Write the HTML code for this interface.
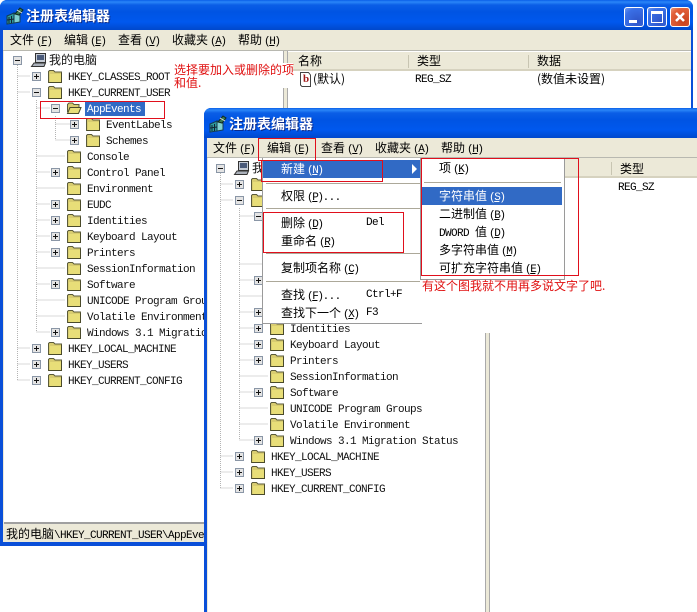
<!DOCTYPE html>
<html><head><meta charset="utf-8"><style>
html,body{margin:0;padding:0;background:#fff}
#p{position:relative;width:697px;height:612px;overflow:hidden;background:#fff;font:12px/16px "WenQuanYi Zen Hei","Noto Sans CJK SC",sans-serif;color:#000}
#p div{position:absolute;white-space:nowrap}
.title{background:linear-gradient(#0a5fe8 0,#2a86f8 2px,#0b5ee6 5px,#0054e3 12px,#0058ee 22px,#0048cc 100%)}
.tt{color:#fff;font-weight:bold;font-size:14px;line-height:16px;text-shadow:1px 1px 0 #0a2a8a}
.a{font:11px/16px "Liberation Mono",monospace;letter-spacing:-1.4px;margin-left:2px}
.m{font:11px/16px "Liberation Mono",monospace;letter-spacing:-.6px}
.w{color:#fff}
.r{color:#e01010}
.box{border:1px solid #e00f1c;box-sizing:border-box}
svg text{font:11px "Liberation Mono",monospace;letter-spacing:-.6px;fill:#111}
svg text.c{font:12px "WenQuanYi Zen Hei","Noto Sans CJK SC",sans-serif;letter-spacing:0}
.ln{stroke:#b4b4b4;stroke-dasharray:1 1;stroke-width:1;fill:none}
.btn{border:1px solid #fff;border-radius:3px;box-sizing:border-box;width:20px;height:20px;background:radial-gradient(circle at 70% 75%,#2f55c8,#3a6fe6 70%,#6f9af0)}
</style></head><body><div id="p">
<svg width="0" height="0" style="position:absolute"><defs>
<symbol id="f" width="16" height="14" viewBox="0 0 16 14"><path d="M1.500 3.500V2.500L2.500 1.500H6.500L8 3H14.500V13.500H1.500Z" fill="#d8cc70" stroke="#5a5a3a"/><rect x="3" y="5" width="11" height="8" fill="#e8de78"/><path d="M14.500 4V13.500H2" stroke="#4a4a2a" fill="none"/></symbol>
<symbol id="o" width="16" height="14" viewBox="0 0 16 14"><path d="M1.500 11V3.500L3 2H6.500L8 3.500H13V6" fill="#d8cc70" stroke="#5a5a3a"/><path d="M1.500 12.500L4 6.500H15L12.500 12.500Z" fill="#e8de78" stroke="#4a4a2a"/></symbol>
<symbol id="p1" width="9" height="9" viewBox="0 0 9 9"><rect x=".5" y=".5" width="8" height="8" fill="#e4e4e4" stroke="#8a96a6"/><path d="M2 4.500H7M4.500 2V7" stroke="#111"/></symbol>
<symbol id="m1" width="9" height="9" viewBox="0 0 9 9"><rect x=".5" y=".5" width="8" height="8" fill="#e4e4e4" stroke="#8a96a6"/><path d="M2 4.500H7" stroke="#111"/></symbol>
<symbol id="pc" width="18" height="16" viewBox="0 0 18 16"><path d="M5.500 1.500H15.500V10.500H5.500Z" fill="#c6ccd6" stroke="#333"/><rect x="7" y="3" width="7" height="5" fill="#4a5a7a"/><path d="M1.500 14.500L4 11H15.500L14 14.500Z" fill="#aab0ba" stroke="#333"/></symbol>
<symbol id="reg" width="20" height="18" viewBox="0 0 20 18"><path d="M2 9L9 6V16L2 17Z" fill="#2f9a9a" stroke="#143c50"/><path d="M9 6L15 8V15L9 16Z" fill="#7fd0d0" stroke="#143c50"/><path d="M4 10V16M6.500 9V16M2 13L9 12" stroke="#123" fill="none"/><path d="M10 7L15 1L18 3L14 8Z" fill="#3a7a50" stroke="#102a20"/><path d="M12 3L17 6" stroke="#ddd"/></symbol>
</defs></svg>

<!-- WINDOW 1 -->
<div style="left:0;top:0;width:693px;height:546px;background:#0a4fd8;border-radius:7px 7px 0 0"></div>
<div class="title" style="left:0;top:0;width:693px;height:30px;border-radius:7px 7px 0 0"></div>
<svg style="position:absolute;left:5px;top:7px" width="20" height="18"><use href="#reg"/></svg>
<div class="tt" style="left:26px;top:8px">注册表编辑器</div>
<div class="btn" style="left:624px;top:7px"><div style="left:4px;top:12px;width:8px;height:3px;background:#fff"></div></div>
<div class="btn" style="left:647px;top:7px"><div style="left:3px;top:3px;width:12px;height:12px;border:1px solid #fff;border-top-width:3px;box-sizing:border-box"></div></div>
<div class="btn" style="left:670px;top:7px;background:radial-gradient(circle at 70% 75%,#c8401c,#e2613a 70%,#ec9a7c)"><svg style="position:absolute;left:2px;top:2px" width="14" height="14"><path d="M3 3L11 11M11 3L3 11" stroke="#fff" stroke-width="2.500"/></svg></div>
<div style="left:3px;top:30px;width:688px;height:512px;background:#ece9d8"></div>
<div style="left:3px;top:50px;width:688px;height:1px;background:#b8b8b0"></div>
<div style="left:10px;top:32px">文件<span class="a">(<u>F</u>)</span></div>
<div style="left:64px;top:32px">编辑<span class="a">(<u>E</u>)</span></div>
<div style="left:118px;top:32px">查看<span class="a">(<u>V</u>)</span></div>
<div style="left:172px;top:32px">收藏夹<span class="a">(<u>A</u>)</span></div>
<div style="left:238px;top:32px">帮助<span class="a">(<u>H</u>)</span></div>
<div style="left:4px;top:51px;width:279px;height:471px;background:#fff"></div>
<div style="left:283px;top:51px;width:5px;height:471px;background:#ece9d8;border-left:1px solid #aaa;border-right:1px solid #aaa;box-sizing:border-box"></div>
<div style="left:288px;top:51px;width:403px;height:57px;background:#fff"></div>
<div style="left:288px;top:52px;width:403px;height:19px;background:#ece9d8;border-bottom:2px solid #d6d2bf;box-sizing:border-box"></div>
<div style="left:408px;top:55px;width:1px;height:13px;background:#c8c5b2"></div>
<div style="left:528px;top:55px;width:1px;height:13px;background:#c8c5b2"></div>
<div style="left:298px;top:53px">名称</div><div style="left:417px;top:53px">类型</div><div style="left:537px;top:53px">数据</div>
<svg style="position:absolute;left:300px;top:72px" width="12" height="15"><path d="M.5.500H8.500L10.500 3V14.500H2L.5 13Z" fill="#fff" stroke="#444"/><text x="3" y="10" style="font:bold 11px 'Liberation Serif',serif;fill:#a01818;letter-spacing:0">b</text></svg>
<div style="left:313px;top:71px">(默认)</div>
<div class="m" style="left:415px;top:72px">REG_SZ</div>
<div style="left:537px;top:71px">(数值未设置)</div>
<div style="left:4px;top:522px;width:687px;height:2px;background:#a0a0a0"></div>
<div style="left:6px;top:526px">我的电脑<span class="m">\HKEY_CURRENT_USER\AppEvents</span></div>

<svg style="position:absolute;left:4px;top:51px" width="279" height="471" viewBox="4 51 279 471">
<path class="ln" d="M17.500 65V380M36.500 100V332M55.500 116V140M17.500 76H30M17.500 92H30M17.500 348H30M17.500 364H30M17.500 380H30M36.500 108H50M36.500 156H65M36.500 172H50M36.500 188H65M36.500 204H50M36.500 220H50M36.500 236H50M36.500 252H50M36.500 268H65M36.500 284H50M36.500 300H65M36.500 316H65M36.500 332H50M55.500 124H70M55.500 140H70"/>
<use href="#m1" x="13" y="56"/><use href="#pc" x="30" y="52"/><text class="c" x="49" y="64">我的电脑</text>
<use href="#p1" x="32" y="72"/><use href="#f" x="47" y="69"/><text x="68" y="80">HKEY_CLASSES_ROOT</text>
<use href="#m1" x="32" y="88"/><use href="#f" x="47" y="85"/><text x="68" y="96">HKEY_CURRENT_USER</text>
<use href="#m1" x="51" y="104"/><use href="#o" x="66" y="101"/><rect x="85" y="101" width="60" height="15" fill="#316ac5"/><text x="87" y="112" style="fill:#fff">AppEvents</text>
<use href="#p1" x="70" y="120"/><use href="#f" x="85" y="117"/><text x="106" y="128">EventLabels</text>
<use href="#p1" x="70" y="136"/><use href="#f" x="85" y="133"/><text x="106" y="144">Schemes</text>
<use href="#f" x="66" y="149"/><text x="87" y="160">Console</text>
<use href="#p1" x="51" y="168"/><use href="#f" x="66" y="165"/><text x="87" y="176">Control Panel</text>
<use href="#f" x="66" y="181"/><text x="87" y="192">Environment</text>
<use href="#p1" x="51" y="200"/><use href="#f" x="66" y="197"/><text x="87" y="208">EUDC</text>
<use href="#p1" x="51" y="216"/><use href="#f" x="66" y="213"/><text x="87" y="224">Identities</text>
<use href="#p1" x="51" y="232"/><use href="#f" x="66" y="229"/><text x="87" y="240">Keyboard Layout</text>
<use href="#p1" x="51" y="248"/><use href="#f" x="66" y="245"/><text x="87" y="256">Printers</text>
<use href="#f" x="66" y="261"/><text x="87" y="272">SessionInformation</text>
<use href="#p1" x="51" y="280"/><use href="#f" x="66" y="277"/><text x="87" y="288">Software</text>
<use href="#f" x="66" y="293"/><text x="87" y="304">UNICODE Program Groups</text>
<use href="#f" x="66" y="309"/><text x="87" y="320">Volatile Environment</text>
<use href="#p1" x="51" y="328"/><use href="#f" x="66" y="325"/><text x="87" y="336">Windows 3.1 Migration Status</text>
<use href="#p1" x="32" y="344"/><use href="#f" x="47" y="341"/><text x="68" y="352">HKEY_LOCAL_MACHINE</text>
<use href="#p1" x="32" y="360"/><use href="#f" x="47" y="357"/><text x="68" y="368">HKEY_USERS</text>
<use href="#p1" x="32" y="376"/><use href="#f" x="47" y="373"/><text x="68" y="384">HKEY_CURRENT_CONFIG</text>
</svg>
<div style="left:170px;top:63px;width:123px;height:25px;background:#fff"></div>
<div class="r" style="left:174px;top:63px;line-height:13px">选择要加入或删除的项<br>和值.</div>
<div class="box" style="left:40px;top:101px;width:125px;height:18px"></div>

<!-- WINDOW 2 -->
<div style="left:204px;top:108px;width:493px;height:504px;background:#0a4fd8;border-radius:7px 0 0 0"></div>
<div class="title" style="left:204px;top:108px;width:493px;height:30px;border-radius:7px 0 0 0"></div>
<svg style="position:absolute;left:208px;top:115px" width="20" height="18"><use href="#reg"/></svg>
<div class="tt" style="left:229px;top:116px">注册表编辑器</div>
<div style="left:207px;top:138px;width:490px;height:474px;background:#ece9d8"></div>
<div style="left:207px;top:157px;width:490px;height:1px;background:#b8b8b0"></div>
<div style="left:213px;top:140px">文件<span class="a">(<u>F</u>)</span></div>
<div style="left:267px;top:140px">编辑<span class="a">(<u>E</u>)</span></div>
<div style="left:321px;top:140px">查看<span class="a">(<u>V</u>)</span></div>
<div style="left:375px;top:140px">收藏夹<span class="a">(<u>A</u>)</span></div>
<div style="left:441px;top:140px">帮助<span class="a">(<u>H</u>)</span></div>
<div style="left:208px;top:158px;width:277px;height:454px;background:#fff"></div>
<div style="left:485px;top:158px;width:5px;height:454px;background:#ece9d8;border-left:1px solid #aaa;border-right:1px solid #aaa;box-sizing:border-box"></div>
<div style="left:490px;top:158px;width:207px;height:454px;background:#fff"></div>
<div style="left:490px;top:158px;width:207px;height:20px;background:#ece9d8;border-bottom:2px solid #d6d2bf;box-sizing:border-box"></div>
<div style="left:611px;top:162px;width:1px;height:13px;background:#c8c5b2"></div>
<div style="left:620px;top:161px">类型</div>
<div class="m" style="left:618px;top:180px">REG_SZ</div>

<svg style="position:absolute;left:208px;top:158px" width="277" height="454" viewBox="208 158 277 454">
<path class="ln" d="M220.500 173V488M239.500 208V440M220.500 184H233M220.500 200H233M220.500 456H233M220.500 472H233M220.500 488H233M239.500 216H254M239.500 264H268M239.500 280H254M239.500 296H268M239.500 312H254M239.500 328H254M239.500 344H254M239.500 360H254M239.500 376H268M239.500 392H254M239.500 408H268M239.500 424H268M239.500 440H254"/>
<use href="#m1" x="216" y="164"/><use href="#pc" x="233" y="160"/><text class="c" x="252" y="172">我的电脑</text>
<use href="#p1" x="235" y="180"/><use href="#f" x="250" y="177"/>
<use href="#m1" x="235" y="196"/><use href="#f" x="250" y="193"/>
<use href="#m1" x="254" y="212"/>
<use href="#p1" x="254" y="276"/>
<use href="#p1" x="254" y="308"/>
<use href="#p1" x="254" y="324"/><use href="#f" x="269" y="321"/><text x="290" y="332">Identities</text>
<use href="#p1" x="254" y="340"/><use href="#f" x="269" y="337"/><text x="290" y="348">Keyboard Layout</text>
<use href="#p1" x="254" y="356"/><use href="#f" x="269" y="353"/><text x="290" y="364">Printers</text>
<use href="#f" x="269" y="369"/><text x="290" y="380">SessionInformation</text>
<use href="#p1" x="254" y="388"/><use href="#f" x="269" y="385"/><text x="290" y="396">Software</text>
<use href="#f" x="269" y="401"/><text x="290" y="412">UNICODE Program Groups</text>
<use href="#f" x="269" y="417"/><text x="290" y="428">Volatile Environment</text>
<use href="#p1" x="254" y="436"/><use href="#f" x="269" y="433"/><text x="290" y="444">Windows 3.1 Migration Status</text>
<use href="#p1" x="235" y="452"/><use href="#f" x="250" y="449"/><text x="271" y="460">HKEY_LOCAL_MACHINE</text>
<use href="#p1" x="235" y="468"/><use href="#f" x="250" y="465"/><text x="271" y="476">HKEY_USERS</text>
<use href="#p1" x="235" y="484"/><use href="#f" x="250" y="481"/><text x="271" y="492">HKEY_CURRENT_CONFIG</text>
</svg>

<!-- white patch under menus -->
<div style="left:420px;top:279px;width:277px;height:54px;background:#fff"></div>

<!-- MENU -->
<div style="left:262px;top:158px;width:160px;height:166px;background:#fff;border-bottom:1px solid #9a9a9a;border-left:1px solid #9a9a9a;box-sizing:border-box"></div>
<div style="left:263px;top:160px;width:157px;height:18px;background:#316ac5"></div>
<div class="w" style="left:281px;top:161px">新建<span class="a">(<u>N</u>)</span></div>
<svg style="position:absolute;left:412px;top:164px" width="6" height="10"><path d="M0 0L5 5L0 10Z" fill="#fff"/></svg>
<div style="left:266px;top:183px;width:154px;height:1px;background:#aca899"></div>
<div style="left:281px;top:188px">权限<span class="a">(<u>P</u>)</span><span class="m">...</span></div>
<div style="left:266px;top:208px;width:154px;height:1px;background:#aca899"></div>
<div style="left:281px;top:215px">删除<span class="a">(<u>D</u>)</span></div><div class="m" style="left:366px;top:215px">Del</div>
<div style="left:281px;top:233px">重命名<span class="a">(<u>R</u>)</span></div>
<div style="left:266px;top:253px;width:154px;height:1px;background:#aca899"></div>
<div style="left:281px;top:260px">复制项名称<span class="a">(<u>C</u>)</span></div>
<div style="left:266px;top:281px;width:154px;height:1px;background:#aca899"></div>
<div style="left:281px;top:287px">查找<span class="a">(<u>F</u>)</span><span class="m">...</span></div><div class="m" style="left:366px;top:287px">Ctrl+F</div>
<div style="left:281px;top:305px">查找下一个<span class="a">(<u>X</u>)</span></div><div class="m" style="left:366px;top:305px">F3</div>

<!-- SUBMENU -->
<div style="left:420px;top:158px;width:145px;height:122px;background:#fff;border:1px solid #9a9a9a;box-sizing:border-box"></div>
<div style="left:424px;top:182px;width:137px;height:1px;background:#aca899"></div>
<div style="left:422px;top:187px;width:140px;height:18px;background:#316ac5"></div>
<div style="left:439px;top:160px">项<span class="a">(<u>K</u>)</span></div>
<div class="w" style="left:439px;top:188px">字符串值<span class="a">(<u>S</u>)</span></div>
<div style="left:439px;top:206px">二进制值<span class="a">(<u>B</u>)</span></div>
<div style="left:439px;top:224px"><span class="m">DWORD </span>值<span class="a">(<u>D</u>)</span></div>
<div style="left:439px;top:242px">多字符串值<span class="a">(<u>M</u>)</span></div>
<div style="left:439px;top:260px">可扩充字符串值<span class="a">(<u>E</u>)</span></div>
<div class="r" style="left:422px;top:278px">有这个图我就不用再多说文字了吧.</div>

<!-- red boxes -->
<div class="box" style="left:258px;top:138px;width:58px;height:23px"></div>
<div class="box" style="left:261px;top:160px;width:122px;height:22px"></div>
<div class="box" style="left:263px;top:212px;width:141px;height:41px"></div>
<div class="box" style="left:421px;top:158px;width:158px;height:118px"></div>
</div></body></html>
